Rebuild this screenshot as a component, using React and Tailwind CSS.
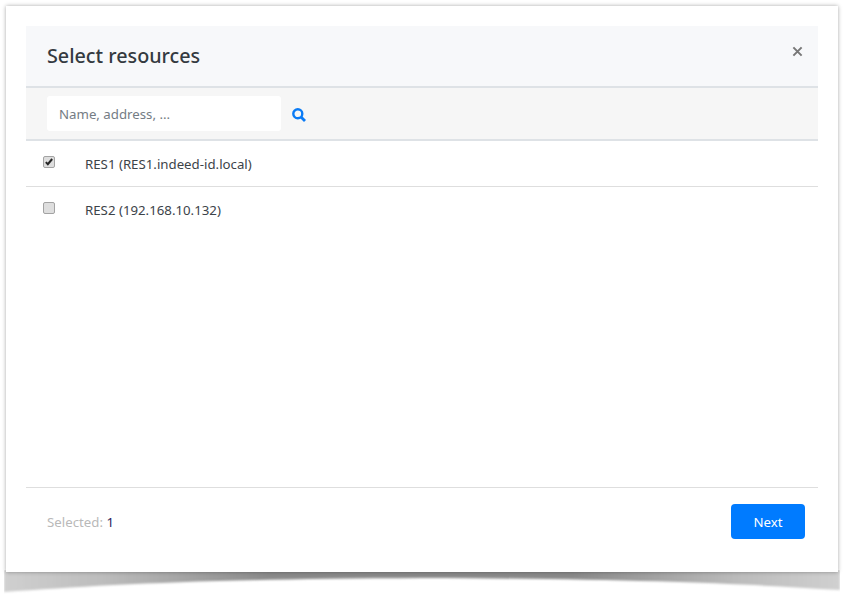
import React from "react";

function Check({ checked }) {
  return (
    <span className="flex h-[12px] w-[12px] items-center justify-center rounded-[2px] border border-[#a3a3a3] bg-[#dedede]">
      {checked && (
        <svg viewBox="0 0 12 12" className="h-[12px] w-[12px]">
          <path d="M2.2 6.2 L4.6 8.6 L9.8 2.4" fill="none" stroke="#262626" strokeWidth="2.4" />
        </svg>
      )}
    </span>
  );
}

function Row({ checked, label, border }) {
  return (
    <div className={`flex h-[46px] items-start pl-[17px] ${border ? "border-b border-[#dedede]" : ""}`}>
      <div className="mt-[15px]"><Check checked={checked} /></div>
      <span className="ml-[30px] mt-[13px] text-[13.25px] leading-[20px] text-[#3c4349]">{label}</span>
    </div>
  );
}

export default function App() {
  return (
    <div className="h-[601px] w-[852px] overflow-hidden bg-white pl-[6px] pt-[6px] font-['Noto_Sans','Open_Sans',sans-serif]">
      <div className="relative h-[566px] w-[832px]">
        <svg className="absolute left-[-2px] top-[564px] h-[24px] w-[836px]" viewBox="0 0 836 24" preserveAspectRatio="none">
          <defs>
            <linearGradient id="sh" x1="0" x2="1" y1="0" y2="0">
              <stop offset="0" stopColor="#d0d0d0" />
              <stop offset="0.12" stopColor="#bcbcbc" />
              <stop offset="0.32" stopColor="#8a8a8a" />
              <stop offset="0.68" stopColor="#8a8a8a" />
              <stop offset="0.88" stopColor="#bcbcbc" />
              <stop offset="1" stopColor="#d0d0d0" />
            </linearGradient>
            <filter id="bl"><feGaussianBlur stdDeviation="1" /></filter>
          </defs>
          <path d="M0 0 H836 V20 C740 14 640 9 418 8 C196 9 96 15 0 22 Z" fill="url(#sh)" filter="url(#bl)" />
        </svg>
        <div className="relative flex h-[566px] w-[832px] flex-col bg-white px-[20px] pt-[20px] shadow-[0_0_4px_rgba(0,0,0,0.35)]">
          <div className="flex h-[62px] shrink-0 items-start justify-between border-b-2 border-[#dee2e6] bg-[#f7f8fa] pl-[21px] pr-[15px]">
            <h1 className="mt-[15px] text-[19.75px] font-medium leading-[30px] text-[#343a40]">Select resources</h1>
            <svg viewBox="0 0 12 12" className="mt-[20px] h-[11px] w-[11px]">
              <path d="M1.5 1.5 L10.5 10.5 M10.5 1.5 L1.5 10.5" stroke="#777" strokeWidth="2.2" />
            </svg>
          </div>
          <div className="flex h-[53px] shrink-0 items-start border-b-2 border-[#dee2e6] bg-[#f6f6f6] pl-[21px]">
            <div className="mt-[8px] flex h-[35px] w-[234px] items-center rounded-[3px] bg-white pl-[12px] pt-[2px] text-[13.25px] text-[#747c84]">
              Name, address, ...
            </div>
            <svg viewBox="0 0 14 14" className="ml-[11px] mt-[20px] h-[14px] w-[14px]">
              <circle cx="5.8" cy="5.8" r="4.5" fill="none" stroke="#0a7bf5" strokeWidth="2.4" />
              <path d="M9 9 L13 13" stroke="#0a7bf5" strokeWidth="2.8" />
            </svg>
          </div>
          <Row checked label="RES1 (RES1.indeed-id.local)" border />
          <Row label="RES2 (192.168.10.132)" />
          <div className="flex-1" />
          <div className="flex h-[85px] shrink-0 items-start justify-between border-t border-[#dedede] pl-[21px] pr-[13px]">
            <span className="mt-[24px] text-[13.25px] leading-[20px] text-[#b9b9b9]">
              Selected: <span className="text-[#2f2360]">1</span>
            </span>
            <button className="mt-[16px] h-[35px] w-[74px] rounded-[4px] bg-[#007bff] pt-[2px] text-[13.25px] text-white">Next</button>
          </div>
        </div>
      </div>
    </div>
  );
}
